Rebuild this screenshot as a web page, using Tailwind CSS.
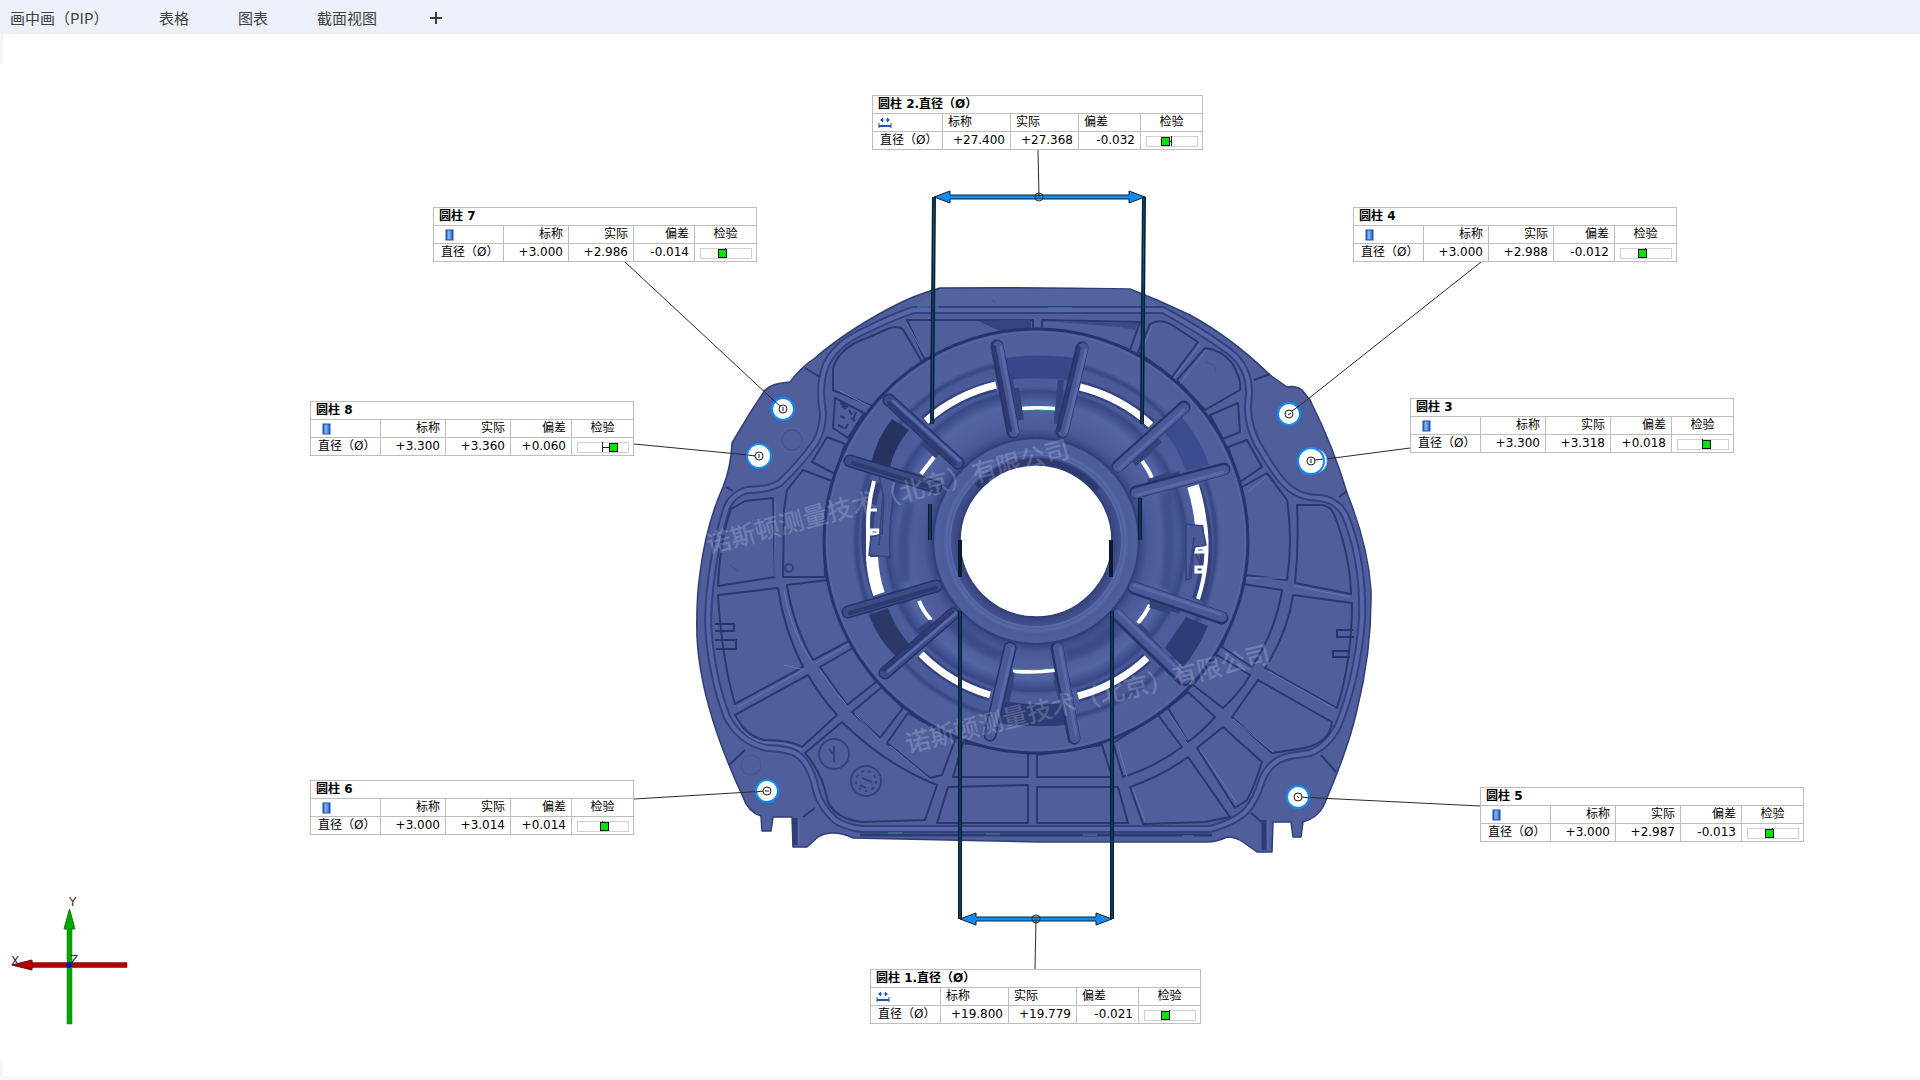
<!DOCTYPE html>
<html lang="zh-CN">
<head>
    <meta charset="UTF-8">
    <meta name="viewport" content="width=device-width, initial-scale=1.0">
    <title>截面视图</title>
    <script src="https://cdn.jsdelivr.net/npm/@tailwindcss/browser@4"></script>
</head>
<body class="flex min-h-screen flex-col bg-white font-['Noto_Sans_CJK_SC',sans-serif] text-black">

    <!-- Tabs -->
    <header class="flex h-[34px] items-center bg-[#ecf0f8] pl-[10px] pt-[2px] text-[15px] leading-5 text-[#404040]">
        <nav class="flex items-center">
            <button class="w-[149px] text-left">画中画（PIP）</button>
            <button class="w-[79px] text-left">表格</button>
            <button class="w-[79px] text-left">图表</button>
            <button class="w-[113px] text-left">截面视图</button>
            <button aria-label="新建" class="flex size-3">
                <svg viewBox="0 0 12 12" class="size-3"><path d="M6 0v12M0 6h12" stroke="#3c3c3c" stroke-width="2"/></svg>
            </button>
        </nav>
    </header>

    <main id="stage" class="relative flex-1 overflow-hidden border-b-4 border-[#f8f8f8] bg-white font-['DejaVu_Sans','Noto_Sans_CJK_SC',sans-serif]">
        <svg viewBox="0 34 1920 1046" class="absolute left-0 top-0 h-[1046px] w-[1920px]" fill="none">
            <defs>
                <radialGradient id="bowl" gradientUnits="userSpaceOnUse" cx="1036" cy="541" r="212">
                    <stop offset="0.48" stop-color="#33437f"/>
                    <stop offset="0.53" stop-color="#4a5997"/>
                    <stop offset="0.60" stop-color="#51609e"/>
                    <stop offset="0.65" stop-color="#5264a4"/>
                    <stop offset="0.70" stop-color="#3a4a8a"/>
                    <stop offset="0.73" stop-color="#4d5d9b"/>
                    <stop offset="0.83" stop-color="#4a5a98"/>
                    <stop offset="0.845" stop-color="#394883"/>
                    <stop offset="0.87" stop-color="#50609d"/>
                    <stop offset="1" stop-color="#4f5f9c"/>
                </radialGradient>
                <radialGradient id="hub" gradientUnits="userSpaceOnUse" cx="1036" cy="541" r="104">
                    <stop offset="0.72" stop-color="#33427c"/>
                    <stop offset="0.82" stop-color="#44538f"/>
                    <stop offset="0.86" stop-color="#5669a9"/>
                    <stop offset="0.89" stop-color="#4c5c9b"/>
                    <stop offset="0.97" stop-color="#4f5f9e"/>
                    <stop offset="1" stop-color="#3c4b88"/>
                </radialGradient>
                <linearGradient id="bar" x1="0" x2="1" y1="0" y2="0">
                    <stop offset="0" stop-color="#1c55b8"/>
                    <stop offset="0.4" stop-color="#8fbaf0"/>
                    <stop offset="1" stop-color="#1c55b8"/>
                </linearGradient>
                <filter id="soft" x="-20%" y="-20%" width="140%" height="140%"><feGaussianBlur stdDeviation="2"/></filter>
            </defs>

            <!-- Canvas corners -->
            <path d="M0 34h3v30h-3zM0 1060h3v20h-3z" fill="#f4f5f7"/>

            <!-- Part body -->
            <path fill="#505f9c" stroke="#2f3e78" stroke-width="1.500" stroke-linejoin="round" d="M940 288Q1035 287 1130 289L1157 300L1190 315Q1232 338 1270 375L1287 387Q1296 385 1302 390L1310 400Q1334 448 1347 493Q1368 545 1371 590Q1372 650 1357 710Q1348 750 1323 807Q1317 818 1303 822L1301 837H1293L1291 822H1273L1272 852H1257L1243 842Q1236 837 1227 837Q1217 842 1207 842L1040 842L853 838Q843 833 833 833Q824 833 818 837L807 847H793L792 817H773L771 831H762L761 816Q748 812 743 797Q728 765 717 733Q699 680 697 637Q696 600 700 573Q706 525 723 487Q731 467 732 443L750 413L765 390Q772 383 790 382Q800 368 815 358Q845 332 890 308Q914 295 940 288Z"/>
            <path d="M940 289H1130L1163 308H913Z" fill="#5565a4" opacity=".6"/>

            <!-- Rim groove -->
            <g stroke-linejoin="round">
                <path id="rim" stroke="#33427e" stroke-width="8" d="M913 310H1163Q1200 330 1230 352Q1250 368 1249 395Q1244 425 1263 453Q1280 482 1292 490Q1303 498 1320 498Q1337 500 1345 515Q1364 560 1362 620Q1357 680 1338 726Q1328 746 1310 753L1290 756Q1270 760 1262 780Q1256 800 1247 810Q1236 822 1210 829H862Q845 827 835 820Q820 806 816 790Q810 760 793 752Q780 748 767 748Q740 742 727 717Q710 672 708 620Q710 560 727 507Q733 494 747 490Q768 490 780 483Q800 464 815 443Q823 430 823 413Q818 385 826 365Q835 345 860 333Q890 318 913 310Z"/>
                <path stroke="#5666a9" stroke-width="4" d="M913 310H1163Q1200 330 1230 352Q1250 368 1249 395Q1244 425 1263 453Q1280 482 1292 490Q1303 498 1320 498Q1337 500 1345 515Q1364 560 1362 620Q1357 680 1338 726Q1328 746 1310 753L1290 756Q1270 760 1262 780Q1256 800 1247 810Q1236 822 1210 829H862Q845 827 835 820Q820 806 816 790Q810 760 793 752Q780 748 767 748Q740 742 727 717Q710 672 708 620Q710 560 727 507Q733 494 747 490Q768 490 780 483Q800 464 815 443Q823 430 823 413Q818 385 826 365Q835 345 860 333Q890 318 913 310Z"/>
            </g>
            <path d="M860 835H1212" stroke="#2d3b74" stroke-width="3"/>
            <path d="M888 833h14M986 834h14M1083 835h14M1182 836h12M917 307h22M1048 308h24" stroke="#3a8a9a" stroke-width="1"/>
            <path d="M805 368L820 377M726 487L733 491M729 765L745 750M803 817L815 808M1254 380L1270 374M1339 497L1347 491M1321 755L1336 772M1251 813L1262 822" stroke="#2b3971" stroke-width="2"/>
            <path d="M795 818V845M1264 820V850" stroke="#2d3c76" stroke-width="5"/>
            <path d="M799 819V845M1268 820V850" stroke="#6171b0" stroke-width="1"/>

            <!-- Pockets between ribs -->
            <g stroke-linejoin="round">
                <path id="pockets" d="M833 390V368Q838 352 855 343L890 328Q900 325 904 331L922 362L872 406Z
                    M907 320H1033V331Q975 335 925 360Z
                    M835 398L864 413L848 438L833 428Z
                    M827 437L845 444L835 474L812 462Z
                    M803 470L832 481L824 530L825 577L783 577L784 510L787 490Z
                    M745 501L773 498L775 577L718 586Q720 540 731 509Z
                    M718 595L778 588Q784 630 803 667L735 704Q722 660 718 595Z
                    M787 585L828 580L851 640L813 660Q793 625 787 585Z
                    M735 715L808 675Q820 696 837 715L802 747Q790 740 765 740Q745 736 735 715Z
                    M820 667L853 648L876 682L847 705Z
                    M852 712L882 687L903 708L880 738Z
                    M887 743L908 713L955 740L942 775L930 778Z
                    M805 753L842 722Q886 765 937 785L925 820L862 822Q836 819 828 802Q822 772 805 753Z
                    M948 787L1028 785V823H937Z
                    M963 743L1028 753V777H953Z
                    M1037 755L1102 745L1112 777H1037Z
                    M1037 787H1118L1128 823H1037Z
                    M1113 743L1158 715L1182 747Q1155 767 1123 777Z
                    M1130 787Q1162 776 1188 757L1230 817L1205 822L1143 824Z
                    M1168 708L1188 692L1215 717Q1203 731 1188 742Z
                    M1197 748L1223 727L1262 762Q1255 785 1247 800L1235 808Z
                    M1193 685L1217 655L1250 675Q1239 694 1223 708Z
                    M1232 717L1258 680L1332 722Q1330 742 1305 748L1272 753Z
                    M1222 647L1243 584L1282 590Q1276 630 1252 667Z
                    M1265 668Q1288 632 1293 595L1352 603Q1352 660 1337 708Z
                    M1242 487L1267 473L1287 500Q1293 540 1287 580L1245 575Z
                    M1297 505L1322 505Q1330 506 1334 514Q1350 555 1351 594L1295 583Q1299 545 1297 505Z
                    M1228 447L1247 440L1262 467L1240 482Z
                    M1210 415L1238 403L1240 432L1223 439Z
                    M1177 380L1205 348Q1222 350 1232 363Q1242 380 1240 390L1205 410Z
                    M1150 324Q1160 318 1172 325L1198 342L1172 377L1138 352Z
                    M1042 320L1140 322L1130 350Q1090 333 1042 331Z" stroke="#2a3870" stroke-width="2"/>
                <use href="#pockets" x="2" y="2" opacity="0"/>
            </g>
            <!-- Light edges of the ribs -->
            <path d="M775 501V577M784 665L805 670M784 590Q790 630 813 664M738 707L803 670M838 390L875 409M925 356L907 324M816 663L850 643M820 670Q833 690 849 708M855 714L880 740M890 746L932 781M735 718Q745 740 765 743Q785 741 802 750M1118 745L1127 777M1133 789L1145 821M1168 712L1187 740M1200 750L1237 803M1223 652L1250 670M1233 719L1273 752M1268 671L1334 708M1245 578H1285M1248 492L1267 476M1180 384L1206 350M1172 380L1200 345M1142 350L1152 326M1295 586L1350 597" stroke="#6777ba" stroke-width="1"/>
            <path d="M978 321L1031 319V328L1000 331Z" fill="#344480"/>
            <path d="M1045 321L1138 323L1135 330L1120 327Z" fill="#3b4b88"/>
            <path d="M842 406l4 3M849 410l3 5M840 416l5 2M848 424l-3 5M856 412l-3 8M840 403l8 4M838 425l6 3M851 418l4 3" stroke="#2b3971" stroke-width="2"/>

            <!-- Small cast details -->
            <g stroke="#34437f" stroke-width="2">
                <circle cx="834" cy="754" r="15"/><circle cx="866" cy="781" r="15"/>
                <circle cx="866" cy="781" r="10" stroke-dasharray="3 4"/>
                <path d="M834 746V762M829 749l4 5M862 778l10 4M860 785l6 3"/>
                <circle cx="789" cy="568" r="4"/>
                <path d="M715 624H734V631H715M715 640H736V649H716" stroke="#27346b"/>
                <path d="M1354 637H1337V630H1353M1350 651H1333V657H1350" stroke="#27346b"/>
            </g>
            <g stroke="#44538f">
                <circle cx="792" cy="440" r="10"/><circle cx="751" cy="765" r="10"/>
                <path d="M992 300l4 3M730 565l8 6M853 560l10-4M1186 390l5 4M1206 362l8 3 2 8M1183 757l4 8"/>
            </g>

            <!-- Disc -->
            <circle cx="1036" cy="541" r="212" fill="url(#bowl)" stroke="#26346c" stroke-width="3"/>
            <circle cx="1036" cy="541" r="209" stroke="#5969ab" stroke-width="1"/>
            <circle cx="1036" cy="541" r="180" stroke="#3a4a88" stroke-width="2"/>
            <circle cx="1036" cy="541" r="150" stroke="#3a4a88" stroke-width="2"/>

            <!-- Shaded sectors between the spokes -->
            <g fill="#2e3c75">
                <path d="M892 419L909 430Q895 445 889 470L871 463Q877 438 892 419Z" fill="#26335f"/>
                <path d="M869 615L888 608Q895 628 910 645L897 657Q878 640 869 615Z" fill="#2b3868"/>
                <path d="M1005 358Q1036 353 1078 358L1073 381Q1040 376 1008 380Z" fill="#37478a"/>
                <path d="M1180 415Q1200 437 1209 465L1186 471Q1178 447 1163 431Z" fill="#3c4c90"/>
                <path d="M1165 648L1186 617L1208 626Q1198 650 1183 667Z"/>
                <path d="M1001 700Q1036 708 1069 702L1074 724Q1036 729 997 723Z"/>
            </g>
            <g fill="#2e3d78" opacity=".5" filter="url(#soft)">
                <path d="M952 610Q975 645 1012 652L1008 664Q966 652 942 620Z"/>
                <path d="M1115 618Q1098 640 1064 650L1066 662Q1108 650 1126 628Z"/>
                <path d="M1170 490Q1180 540 1170 590L1160 588Q1168 540 1160 494Z"/>
                <path d="M905 500Q893 540 900 583L910 581Q906 540 914 503Z"/>
            </g>

            <!-- Slots -->
            <g stroke="#34437f" stroke-width="12">
                <path d="M925 421A163 163 0 0 1 995 386M1080 387A163 163 0 0 1 1151 425M1147 658A163 163 0 0 1 1078 696M921 654A163 163 0 0 0 990 695"/>
                <path d="M876 482A170 170 0 0 0 878 595M1195 487A170 170 0 0 1 1198 600"/>
            </g>
            <g stroke="#fff">
                <path d="M926 421A163 163 0 0 1 996 385M1080 387A163 163 0 0 1 1151 425M1147 658A163 163 0 0 1 1078 696M921 654A163 163 0 0 0 990 695" stroke-width="7"/>
                <path d="M874 481A170 170 0 0 0 868 530V561" stroke-width="4"/>
                <path d="M872 557Q873 577 879 594" stroke-width="12"/>
                <path d="M1193 486Q1199 505 1201 525" stroke-width="12"/>
                <path d="M1205 523A170 170 0 0 1 1198 599" stroke-width="4"/>
                <path d="M1197 548H1204V552H1196ZM1196 567H1203V572H1196ZM870 510H877M871 530H878V534H871Z" stroke-width="3"/>
                <path d="M1018 409Q1036 407 1058 409M1013 671Q1034 673 1055 670M921 474L934 457M1142 461Q1149 470 1153 480M1150 605Q1145 615 1138 623M919 601Q923 611 931 620" stroke-width="4"/>
            </g>
            <path d="M1018 411Q1036 409 1058 411M1013 669Q1034 671 1055 668" stroke="#2f8f7c" stroke-width="1"/>
            <g fill="#4b5b99" stroke="#34437f" stroke-width="1.500">
                <path d="M879 475L896 482Q888 520 890 557L869 555L871 537L882 534L884 500Z"/>
                <path d="M883 493L879 545" />
                <path d="M1186 524L1202 526L1206 545L1194 547L1191 578L1186 580Z"/>
                <path d="M1194 537L1189 577M1196 555L1201 565"/>
            </g>

            <!-- Spokes -->
            <path stroke="#34437c" stroke-width="6" d="M1016 388L1021 420M1060 395L1057 424M1150 450L1134 464M1170 475L1148 482M1150 605L1170 611M1138 625L1150 637M1056 672L1060 690M1012 672L1008 690M932 622L918 632M920 592L902 602M905 472L925 480M922 442L938 456"/>
            <path stroke="#34437c" stroke-width="6" d="M1009 375L1017 420M1061 380L1057 420M1160 440L1140 458M1180 474L1150 483M1150 601L1180 611M1140 632L1160 650M1056 680L1062 700M1011 682L1006 702"/>
            <g stroke-linecap="round">
                <path stroke="#26346a" stroke-width="13" d="M997 346L1013 432M1082 348L1062 432M1184 407L1118 466M1224 469L1136 492M1134 588L1222 618M1117 615L1184 680M1057 648L1074 738M1010 648L990 735M953 614L885 673M936 586L848 612M850 461L936 487M889 400L958 463"/>
                <path stroke="#4a5995" stroke-width="10" d="M998 346L1014 432M1083 348L1063 432M1184 408L1118 467M1224 470L1136 493M1134 587L1222 617M1118 614L1185 679M1058 648L1075 738M1010 648L990 735"/>
                <path stroke="#3d4c86" stroke-width="10" d="M953 614L885 673M936 586L848 612M850 461L936 487M889 400L958 463"/>
                <path stroke="#5868aa" stroke-width="3" d="M1001 347L1017 432M1086 350L1066 432M1184 410L1120 468M1223 472L1137 495M1134 585L1220 614M1119 612L1184 675M1060 648L1076 735M1013 648L993 732M956 613L888 671M893 401L960 461"/>
                <path stroke="#2e3b70" stroke-width="4" d="M994 347L1010 430M1079 348L1059 430M952 612L884 670M936 588L850 613M853 463L936 489M889 403L955 464"/>
            </g>

            <!-- Hub -->
            <circle cx="1036" cy="541" r="103" fill="url(#hub)" stroke="#313f7a" stroke-width="2"/>
            <path d="M975 484A84 84 0 0 1 1100 488L1092 494A76 76 0 0 0 980 490Z" fill="#2c3a70"/>
            <circle cx="1036" cy="541" r="86" stroke="#5667ab" stroke-width="2"/>
            <circle cx="1036" cy="541" r="76" fill="#fff" stroke="#2f3e74" stroke-width="1.500"/>

            <!-- Watermark -->
            <g fill="#fff" fill-opacity=".2" font-family="'Noto Sans CJK SC', sans-serif" font-size="25" font-weight="500">
                <text transform="translate(709 554) rotate(-15)">诺斯顿测量技术（北京）有限公司</text>
                <text transform="translate(908 753) rotate(-14)">诺斯顿测量技术（北京）有限公司</text>
            </g>

            <!-- Extension lines -->
            <g stroke="#0a1c2c" stroke-width="4">
                <path d="M934 197L932 424M1144 197L1142 424M930 504V540M1140 498V540M960 540V577M1111 540V577M960 611V919M1112 611V919"/>
                <path d="M934 197L932 424M1144 197L1142 424M930 504V540M1140 498V540M960 611V919M1112 611V919" stroke="#0a5c94" stroke-width="1"/>
            </g>

            <!-- Dimension arrows -->
            <g fill="#0f8cf0" stroke="#10202c" stroke-width="1">
                <path d="M934 197L950 191V195H1129V191L1145 197L1129 203V199H950V203Z"/>
                <path d="M960 919L976 913V917H1096V913L1112 919L1096 925V921H976V925Z"/>
            </g>

            <!-- Leaders -->
            <g stroke="#2a2a2a">
                <path d="M1038 150L1039 197M1036 919L1035 969M625 262L783 409M634 444L759 456M634 799L767 791M1481 262L1289 414M1410 448L1311 461M1480 806L1298 797"/>
                <circle cx="1039" cy="197" r="4"/>
                <circle cx="1036" cy="919" r="4"/>
            </g>
            <circle cx="1315" cy="461" r="12" fill="#fff" stroke="#7fb8e8"/>
            <g fill="#fff" stroke="#0d8bf0" stroke-width="2">
                <circle cx="783" cy="409" r="11"/><circle cx="759" cy="456" r="12"/><circle cx="1289" cy="414" r="11"/>
                <circle cx="1311" cy="461" r="13"/><circle cx="767" cy="791" r="11"/><circle cx="1298" cy="797" r="11"/>
            </g>
            <g stroke="#1c1c1c">
                <circle cx="783" cy="409" r="4"/><circle cx="759" cy="456" r="4"/><circle cx="1289" cy="414" r="4"/>
                <circle cx="1311" cy="461" r="4"/><circle cx="767" cy="791" r="4"/><circle cx="1298" cy="797" r="4"/>
                <path d="M783 407v4M759 454v4M1288 415l3-2M1311 459v4M765 791h4M1297 796l2 2M772 399L780 406M748 455L755 456M756 792L763 791M1299 406L1292 411M1323 459L1315 460M1309 798L1302 797"/>
            </g>

            <!-- Axis triad -->
            <g>
                <path d="M32 962.5H127V967.5H32Z" fill="#b00000" stroke="#7a0000" stroke-width=".5"/>
                <path d="M12 965L32 960V970Z" fill="#b00000" stroke="#7a0000"/>
                <path d="M67 928H72V1024H67Z" fill="#00a800" stroke="#0a7a0a" stroke-width=".5"/>
                <path d="M69.500 909L75 929H64Z" fill="#00a800" stroke="#0a7a0a"/>
                <circle cx="69" cy="965" r="3" fill="#0a10c0"/>
                <g fill="#333" font-family="'DejaVu Sans', sans-serif" font-size="12">
                    <text x="11" y="965">X</text>
                    <text x="69" y="906">Y</text>
                    <text x="70" y="964">Z</text>
                </g>
            </g>
        </svg>
    </main>

    <script>
        // Measurement labels: position on the stage, values, tolerance marker offset
        const labels = [
            { name: '圆柱 2.直径（Ø）', x: 872, y: 61, kind: 'distance', values: ['+27.400', '+27.368', '-0.032'], mark: 15 },
            { name: '圆柱 7', x: 433, y: 173, kind: 'cylinder', values: ['+3.000', '+2.986', '-0.014'], mark: 18 },
            { name: '圆柱 4', x: 1353, y: 173, kind: 'cylinder', values: ['+3.000', '+2.988', '-0.012'], mark: 18 },
            { name: '圆柱 8', x: 310, y: 367, kind: 'cylinder', values: ['+3.300', '+3.360', '+0.060'], mark: 32 },
            { name: '圆柱 3', x: 1410, y: 364, kind: 'cylinder', values: ['+3.300', '+3.318', '+0.018'], mark: 25 },
            { name: '圆柱 6', x: 310, y: 746, kind: 'cylinder', values: ['+3.000', '+3.014', '+0.014'], mark: 23 },
            { name: '圆柱 5', x: 1480, y: 753, kind: 'cylinder', values: ['+3.000', '+2.987', '-0.013'], mark: 18 },
            { name: '圆柱 1.直径（Ø）', x: 870, y: 935, kind: 'distance', values: ['+19.800', '+19.779', '-0.021'], mark: 17 },
        ];

        const icons = {
            distance: '<svg viewBox="0 0 14 12" class="h-3 w-[14px]" fill="none" stroke="#1f56b5"><path d="M1 6v5M13 6v5"/><path d="M1 9h12" stroke-width="2"/><path d="M2 3l3-2.500v5zM12 3l-3-2.500v5z" fill="#1f56b5" stroke="none"/><path d="M4 3h2M8 3h2"/></svg>',
            cylinder: '<svg viewBox="0 0 14 12" class="ml-px h-3 w-[14px]"><rect x="6" y="1" width="7" height="10" fill="url(#bar)" stroke="#1450b0"/></svg>',
        };

        // Green square with a tick at the nominal value
        function toleranceBar(mark) {
            const from = Math.min(mark + 4, 25);
            const to = Math.max(mark + 4, 25);
            return `<svg viewBox="0 0 52 12" class="mx-auto h-3 w-[52px]" fill="none">
                <rect x="0.5" y="1.5" width="51" height="10" stroke="#cfcfcf"/>
                <path d="M${from} 6.5H${to}M25.5 1V11" stroke="#222"/>
                <rect x="${mark + 0.5}" y="2.5" width="8" height="8" fill="#00e400" stroke="#111"/>
            </svg>`;
        }

        const stage = document.getElementById('stage');

        labels.forEach((label) => {
            const wide = label.kind === 'distance';
            const table = document.createElement('table');
            table.className = wide
                ? 'absolute w-[331px] table-fixed border-collapse bg-white text-[12px] leading-4'
                : 'absolute w-[324px] table-fixed border-collapse bg-white text-[12px] leading-4';
            table.style.left = label.x + 'px';
            table.style.top = label.y + 'px';

            const cols = wide
                ? '<col class="w-[70px]"><col class="w-[68px]"><col class="w-[68px]"><col class="w-[62px]"><col class="w-[62px]">'
                : '<col class="w-[70px]"><col class="w-[65px]"><col class="w-[65px]"><col class="w-[61px]"><col class="w-[62px]">';
            const headClass = wide
                ? 'h-[18px] border border-[#bdbdbd] px-[5px] pt-0 pb-px text-left font-normal'
                : 'h-[18px] border border-[#bdbdbd] px-[5px] pt-0 pb-px text-right font-normal';

            table.innerHTML = `
                <colgroup>${cols}</colgroup>
                <thead>
                    <tr><th colspan="5" class="h-[18px] border border-[#bdbdbd] px-[5px] pt-0 pb-px text-left font-bold">${label.name}</th></tr>
                    <tr>
                        <td class="h-[18px] border border-[#bdbdbd] px-[5px] py-0">${icons[label.kind]}</td>
                        <th class="${headClass}">标称</th>
                        <th class="${headClass}">实际</th>
                        <th class="${headClass}">偏差</th>
                        <th class="h-[18px] border border-[#bdbdbd] px-0 pt-0 pb-px text-center font-normal">检验</th>
                    </tr>
                </thead>
                <tbody>
                    <tr>
                        <th class="h-[18px] whitespace-nowrap border border-[#bdbdbd] pt-0 pb-px pl-[7px] pr-0 text-left font-normal">直径（Ø）</th>
                        ${label.values.map((v) => `<td class="h-[18px] border border-[#bdbdbd] px-[5px] pt-0 pb-px text-right">${v}</td>`).join('')}
                        <td class="h-[18px] border border-[#bdbdbd] p-0">${toleranceBar(label.mark)}</td>
                    </tr>
                </tbody>`;
            stage.appendChild(table);
        });
    </script>
</body>
</html>
